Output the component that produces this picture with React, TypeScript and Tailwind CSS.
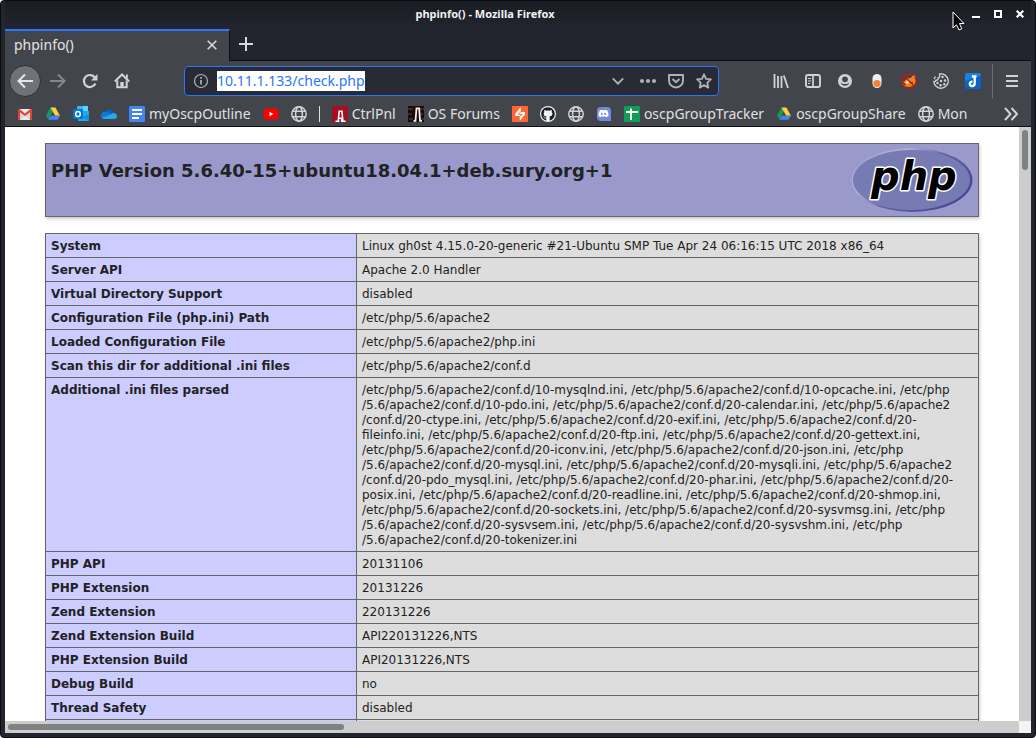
import type { ReactNode } from "react";
import { FaDiscord, FaGithub } from "react-icons/fa";

const Svg = ({ children, className = "size-4" }: { children: ReactNode; className?: string }) => (
  <svg viewBox="0 0 16 16" className={`${className} shrink-0`} fill="currentColor" aria-hidden="true">
    {children}
  </svg>
);

const Globe = () => (
  <Svg>
    <g fill="none" stroke="#d3d3d4" strokeWidth="1.5">
      <circle cx="8" cy="8" r="7.2" />
      <ellipse cx="8" cy="8" rx="3.4" ry="7.2" />
      <path d="M1.8 5.2h12.4M1.8 10.8h12.4" />
    </g>
  </Svg>
);

const Drive = () => (
  <Svg>
    <path d="M5.4 1.5 1 9.6l2.4 4L7.9 5.8z" fill="#0f9d58" />
    <path d="M5.4 1.5h5L15 9.7h-4.8z" fill="#ffcd40" />
    <path d="M5.8 9.7H15l-2.4 4H3.4z" fill="#4285f4" />
  </Svg>
);

const Gmail = () => (
  <Svg>
    <path d="M1 3h14v11H1z" fill="#e9e9e9" />
    <path d="M3 6v8l5-4.5L13 14V6L8 9.6z" fill="#d5d5d5" />
    <path d="M1 14V3h1.6L8 7.4 13.4 3H15v11h-2V6.2L8 10 3 6.2V14z" fill="#db4437" />
  </Svg>
);

const Outlook = () => (
  <Svg>
    <path d="M4 0h11v6H4z" fill="#35b8f1" />
    <path d="M10 0h5v5h-5z" fill="#50d9ff" />
    <path d="M4 4h6v5H4z" fill="#0364b8" />
    <path d="M10 5h6v9a1 1 0 0 1-1 1H5V9h5z" fill="#28a8ea" />
    <path d="m16 8-7 3.6L16 15z" fill="#1490df" />
    <rect x="0" y="3" width="10" height="10" rx="1" fill="#0078d4" />
    <ellipse cx="5" cy="8" rx="2.3" ry="2.6" fill="none" stroke="#fff" strokeWidth="1.5" />
  </Svg>
);

const OneDrive = () => (
  <Svg>
    <path d="M4 5.8A5 5 0 0 1 13 7l-4 5H3A3.2 3.2 0 0 1 0 9c0-2 1.7-3.3 4-3.2z" fill="#0364b8" />
    <path d="M4 5.8c2-.3 3 .2 4.5 1.2L12 9l-3 4H3.2A3.5 3.5 0 0 1 0 9.5c0-2 1.5-3.7 4-3.7z" fill="#0f78d4" />
    <path d="M8.5 9 12 7c2.6-.2 4 1.3 4 3.2 0 1.7-1.2 2.8-3 2.8H3.2c-1 0-1.9-.5-2.4-1.2z" fill="#28a8ea" />
  </Svg>
);

const Docs = () => (
  <Svg>
    <rect width="16" height="16" rx="1.5" fill="#4285f4" />
    <path d="M3 4h10M3 8h10M3 12h7" stroke="#fff" strokeWidth="1.8" />
  </Svg>
);

const Sheets = () => (
  <Svg>
    <rect width="16" height="16" rx="1" fill="#0f9d58" />
    <path d="M2 6h12M7 2.5V14" stroke="#fff" strokeWidth="2" />
  </Svg>
);

const Youtube = () => (
  <Svg>
    <rect x="0.5" y="2.5" width="15" height="11" rx="3" fill="#f00" />
    <path d="M6.5 5.8v4.4L10.3 8z" fill="#fff" />
  </Svg>
);

const Offsec = ({ dark = false }: { dark?: boolean }) => (
  <Svg>
    <path d="M0 0h16v16H0z" fill={dark ? "#180b0c" : "#a60e22"} />
    {dark && <path d="M0 3h5M0 8h4M1 13h4M12 3h4M12 8h3M12 13h4" stroke="#66494b" strokeWidth="1.2" />}
    {dark ? (
      <path d="M5.5 14.8h2l1-12.5h2.700L12 14.800h2" fill="none" stroke="#f5eeee" strokeWidth="1.8" />
    ) : (
      <path d="M3.500 15.200h3v-3h3.200v3h4M6.400 13l.8-7.800h2.700l1 10" fill="none" stroke="#fff" strokeWidth="1.6" />
    )}
  </Svg>
);

const Burp = () => (
  <Svg>
    <path d="M0 0h16v16H0z" fill="#ff6633" />
    <path d="M8.700 1v5H13v2.200L7.800 15v-5H3.300V7.800z" fill="#fff" />
    <path d="M8.700 6 6 8.300h4.200L7.800 10" fill="none" stroke="#ff6633" strokeWidth=".9" />
  </Svg>
);

const bookmarks: { icon: ReactNode; name: string; text?: string }[] = [
  { icon: <Gmail />, name: "Gmail" },
  { icon: <Drive />, name: "Drive" },
  { icon: <Outlook />, name: "Outlook" },
  { icon: <OneDrive />, name: "OneDrive" },
  { icon: <Docs />, name: "Docs", text: "myOscpOutline" },
  { icon: <Youtube />, name: "YouTube" },
  { icon: <Globe />, name: "Site" },
  { icon: null, name: "separator" },
  { icon: <Offsec />, name: "Control panel", text: "CtrlPnl" },
  { icon: <Offsec dark />, name: "Forums", text: "OS Forums" },
  { icon: <Burp />, name: "Burp" },
  {
    icon: (
      <span className="flex size-4 shrink-0 items-center justify-center rounded-full bg-[#f2f2f2]">
        <FaGithub className="size-[14px] text-[#1b1f23]" />
      </span>
    ),
    name: "GitHub",
  },
  { icon: <Globe />, name: "Site" },
  {
    icon: (
      <span className="flex size-4 shrink-0 items-center justify-center">
        <span className="flex size-[14px] items-center justify-center rounded-sm rounded-br-none bg-[#7289da]">
          <FaDiscord className="size-[11px] text-white" />
        </span>
      </span>
    ),
    name: "Discord",
  },
  { icon: <Sheets />, name: "Sheets", text: "oscpGroupTracker" },
  { icon: <Drive />, name: "Drive", text: "oscpGroupShare" },
  { icon: <Globe />, name: "Monitor", text: "Mon" },
];

const tools: { name: string; icon: ReactNode }[] = [
  {
    name: "Library",
    icon: (
      <Svg>
        <path d="M1.500 1v14M5 3v12M8.500 3v12M10.800 2.500 15 15" fill="none" stroke="currentColor" strokeWidth="1.8" />
      </Svg>
    ),
  },
  {
    name: "Sidebars",
    icon: (
      <Svg>
        <rect x="1" y="2" width="14" height="12" rx="2" fill="none" stroke="currentColor" strokeWidth="1.9" />
        <path d="M8 2v12" stroke="currentColor" strokeWidth="1.7" />
        <path d="M3 5.500h3M3 8h3M3 10.500h2" stroke="currentColor" strokeWidth="1" />
      </Svg>
    ),
  },
  {
    name: "Account",
    icon: (
      <Svg>
        <circle cx="8" cy="8" r="7" />
        <circle cx="8" cy="6.300" r="2.900" fill="#42454c" />
        <path d="M3.600 9.500c.6 2.200 2.300 3.300 4.400 3.300s3.800-1.100 4.400-3.300c-1.200 1-2.700 1.500-4.400 1.500s-3.200-.5-4.400-1.500z" fill="#42454c" />
      </Svg>
    ),
  },
  {
    name: "Proxy toggle",
    icon: (
      <Svg>
        <rect x="3.500" y="1" width="9" height="14" rx="4.500" fill="#eee" />
        <circle cx="8" cy="10.500" r="3.600" fill="#f48232" />
      </Svg>
    ),
  },
  {
    name: "Proxy off",
    icon: (
      <Svg>
        <path d="M6 5.500 9.500 5 13 2l1.500 1.500.5 5-2 3.500-4 2-5-.5L1.500 12 1 8.500l2 .5z" fill="#e8861a" />
        <path d="m11 3 3-1 .5 3zM4 9l3-2 1.500 2L6 11.500z" fill="#ffd9a0" />
        <path d="m1.500 9.500 3 2.500M9 9l3 1" stroke="#5a2c12" strokeWidth="1.200" fill="none" />
        <circle cx="8" cy="8" r="7.200" fill="none" stroke="#cf1010" strokeWidth="1.200" />
        <path d="m3 3 10 10" stroke="#cf1010" strokeWidth="1.300" />
      </Svg>
    ),
  },
  {
    name: "Cookies",
    icon: (
      <Svg>
        <path
          d="M6.500 1A7.200 7.200 0 1 1 .8 8.500c1.200.3 2-.2 2-1.300 1.600.3 2.600-.6 2.300-2.200C6.500 4.800 7 3 6.500 1z"
          fill="none"
          stroke="currentColor"
          strokeWidth="1.300"
        />
        <path d="M1 5.800 2.500 3.500" stroke="currentColor" strokeWidth="1.300" />
        <circle cx="9.500" cy="4" r="1.200" />
        <circle cx="8" cy="8" r="1.200" />
        <circle cx="12" cy="7.500" r="1.200" />
        <circle cx="4.500" cy="10" r="1.200" />
        <circle cx="7.500" cy="12.300" r="1.200" />
        <circle cx="11.300" cy="11.200" r="1.200" />
      </Svg>
    ),
  },
  {
    name: "Notes",
    icon: (
      <Svg>
        <rect width="16" height="16" rx="2.500" fill="#0b63c7" />
        <path d="M0 8V2.500A2.500 2.500 0 0 1 2.500 0h11A2.500 2.500 0 0 1 16 2.500z" fill="#1a82e2" />
        <path d="M7 3.500h4.500M9.700 3.500v7c0 1.700-1.100 2.500-2.500 2.500S4.800 12 4.800 10.700 5.900 8.600 7.500 8.800" fill="none" stroke="#fff" strokeWidth="2.300" />
      </Svg>
    ),
  },
];

const rows: [string, string[]][] = [
  ["System", ["Linux gh0st 4.15.0-20-generic #21-Ubuntu SMP Tue Apr 24 06:16:15 UTC 2018 x86_64"]],
  ["Server API", ["Apache 2.0 Handler"]],
  ["Virtual Directory Support", ["disabled"]],
  ["Configuration File (php.ini) Path", ["/etc/php/5.6/apache2"]],
  ["Loaded Configuration File", ["/etc/php/5.6/apache2/php.ini"]],
  ["Scan this dir for additional .ini files", ["/etc/php/5.6/apache2/conf.d"]],
  [
    "Additional .ini files parsed",
    [
      "/etc/php/5.6/apache2/conf.d/10-mysqlnd.ini, /etc/php/5.6/apache2/conf.d/10-opcache.ini, /etc/php",
      "/5.6/apache2/conf.d/10-pdo.ini, /etc/php/5.6/apache2/conf.d/20-calendar.ini, /etc/php/5.6/apache2",
      "/conf.d/20-ctype.ini, /etc/php/5.6/apache2/conf.d/20-exif.ini, /etc/php/5.6/apache2/conf.d/20-",
      "fileinfo.ini, /etc/php/5.6/apache2/conf.d/20-ftp.ini, /etc/php/5.6/apache2/conf.d/20-gettext.ini,",
      "/etc/php/5.6/apache2/conf.d/20-iconv.ini, /etc/php/5.6/apache2/conf.d/20-json.ini, /etc/php",
      "/5.6/apache2/conf.d/20-mysql.ini, /etc/php/5.6/apache2/conf.d/20-mysqli.ini, /etc/php/5.6/apache2",
      "/conf.d/20-pdo_mysql.ini, /etc/php/5.6/apache2/conf.d/20-phar.ini, /etc/php/5.6/apache2/conf.d/20-",
      "posix.ini, /etc/php/5.6/apache2/conf.d/20-readline.ini, /etc/php/5.6/apache2/conf.d/20-shmop.ini,",
      "/etc/php/5.6/apache2/conf.d/20-sockets.ini, /etc/php/5.6/apache2/conf.d/20-sysvmsg.ini, /etc/php",
      "/5.6/apache2/conf.d/20-sysvsem.ini, /etc/php/5.6/apache2/conf.d/20-sysvshm.ini, /etc/php",
      "/5.6/apache2/conf.d/20-tokenizer.ini",
    ],
  ],
  ["PHP API", ["20131106"]],
  ["PHP Extension", ["20131226"]],
  ["Zend Extension", ["220131226"]],
  ["Zend Extension Build", ["API220131226,NTS"]],
  ["PHP Extension Build", ["API20131226,NTS"]],
  ["Debug Build", ["no"]],
  ["Thread Safety", ["disabled"]],
  ["", [""]],
];

function TitleBar() {
  return (
    <div className="flex h-7 shrink-0 items-center bg-linear-to-b from-[#1a1c23] to-[#22252e]">
      <h1 className="flex-1 pb-px text-center text-[11px] font-bold text-[#f2f2f2]">phpinfo() - Mozilla Firefox</h1>
      <div className="flex text-white">
        <button aria-label="Minimize" className="flex h-7 w-[22px] items-center justify-center">
          <svg viewBox="0 0 8 8" className="size-2" aria-hidden="true"><path d="M0 5h8v2H0z" fill="currentColor" /></svg>
        </button>
        <button aria-label="Maximize" className="flex h-7 w-[22px] items-center justify-center pb-[2px]">
          <svg viewBox="0 0 8 8" className="size-2" aria-hidden="true"><path d="M1 1h6v6H1z" fill="none" stroke="currentColor" strokeWidth="2" /></svg>
        </button>
        <button aria-label="Close" className="flex h-7 w-[22px] items-center justify-center pb-[2px]">
          <svg viewBox="0 0 8 8" className="size-2" aria-hidden="true"><path d="m.7.7 6.600 6.600M7.300.7.7 7.300" stroke="currentColor" strokeWidth="2.100" /></svg>
        </button>
      </div>
    </div>
  );
}

function TabStrip() {
  return (
    <div className="flex h-8 shrink-0 bg-[#22252e]">
      <div className="flex w-[225px] items-center justify-between border-t-2 border-r border-t-[#2a76f6] border-r-[#0d0e12] bg-[#42454c] pr-3 pb-[2px] pl-[9px] text-sm text-[#e4e4e4]">
        <span>phpinfo()</span>
        <button aria-label="Close tab">
          <svg viewBox="0 0 10 10" className="size-[10px]" aria-hidden="true"><path d="m.7.7 8.600 8.600M9.300.7.700 9.300" stroke="#d8d8d8" strokeWidth="1.600" /></svg>
        </button>
      </div>
      <div className="flex flex-1 border-b border-[#0d0e12] pl-[9px]">
        <button aria-label="New tab" className="self-center pb-px">
          <svg viewBox="0 0 14 14" className="size-[14px]" aria-hidden="true"><path d="M7 0v14M0 7h14" stroke="#d8d8d8" strokeWidth="2" /></svg>
        </button>
      </div>
    </div>
  );
}

const navButton = "flex size-8 shrink-0 items-center justify-center";

function NavBar() {
  return (
    <div className="flex h-10 shrink-0 items-center bg-[#42454c] pr-[3px] pl-1 text-[#d3d3d4]">
      <button aria-label="Back" className={`${navButton} mr-px rounded-full border border-[#2e3036] bg-[#717277] text-[#e6e6e6]`}>
        <Svg><path d="M16 8H1.500M8 1.500 1.500 8 8 14.500" fill="none" stroke="currentColor" strokeWidth="2" /></Svg>
      </button>
      <button aria-label="Forward" className={`${navButton} text-[#85878b]`}>
        <Svg><path d="M0 8h14.500M8 1.500 14.500 8 8 14.500" fill="none" stroke="currentColor" strokeWidth="2" /></Svg>
      </button>
      <button aria-label="Reload" className={navButton}>
        <Svg>
          <path d="M13.400 10.500A6 6 0 1 1 12.800 4.500" fill="none" stroke="currentColor" strokeWidth="2.200" />
          <path d="M15.500 1v6.500H9z" />
        </Svg>
      </button>
      <button aria-label="Home" className={navButton}>
        <Svg>
          <path d="M.8 8.500 8 1.500l7.200 7" fill="none" stroke="currentColor" strokeWidth="2" />
          <path d="M3.300 7.500v6.700h9.400V7.500" fill="none" stroke="currentColor" strokeWidth="2" />
          <path d="M6.300 13.500V9h3.400v4.500zM12 1.500h1.800V6L12 4.500z" />
        </Svg>
      </button>
      <div className="mx-[46px] flex h-[30px] flex-1 items-center rounded border border-[#2a76f6] bg-[#282a35] pl-2 text-[#b1b2b5]">
        <svg viewBox="0 0 16 16" className="mr-2 size-4" aria-hidden="true">
          <circle cx="8" cy="8" r="6.500" fill="none" stroke="currentColor" strokeWidth="1.200" />
          <path d="M8 7v4.500M8 4v1.700" stroke="currentColor" strokeWidth="1.700" />
        </svg>
        <input
          aria-label="Address"
          defaultValue="10.11.1.133/check.php"
          className="field-sizing-content h-5 bg-white text-sm leading-5 text-[#2a76f6] outline-none"
        />
        <span className="flex-1" />
        <button aria-label="Show history" className="flex w-8 justify-center">
          <Svg className="size-3"><path d="m1 4.500 7 7 7-7" fill="none" stroke="currentColor" strokeWidth="2.500" /></Svg>
        </button>
        <button aria-label="Page actions" className="flex w-7 justify-center">
          <Svg><circle cx="2" cy="8" r="2" /><circle cx="8" cy="8" r="2" /><circle cx="14" cy="8" r="2" /></Svg>
        </button>
        <button aria-label="Save to Pocket" className="flex w-7 justify-center">
          <Svg>
            <path d="M1 2h14v5.500a7 7 0 0 1-14 0z" fill="none" stroke="currentColor" strokeWidth="1.900" strokeLinejoin="round" />
            <path d="M4.500 6 8 9.300 11.500 6" fill="none" stroke="currentColor" strokeWidth="1.900" />
          </Svg>
        </button>
        <button aria-label="Bookmark this page" className="flex w-7 justify-center">
          <Svg><path d="m8 1.300 2 4.500 4.900.6-3.600 3.300 1 4.900L8 12.100l-4.300 2.500 1-4.900L1.100 6.400 6 5.800z" fill="none" stroke="currentColor" strokeWidth="1.800" strokeLinejoin="round" /></Svg>
        </button>
      </div>
      <div className="flex">
        {tools.map((tool) => (
          <button key={tool.name} aria-label={tool.name} className={navButton}>{tool.icon}</button>
        ))}
      </div>
      <div className="ml-[3px] flex h-[34px] items-center border-l border-[#6c6e73] pl-[3px]">
        <button aria-label="Menu" className={navButton}>
          <svg viewBox="0 0 12 12" className="size-3" aria-hidden="true"><path d="M0 1h12M0 6h12M0 11h12" stroke="currentColor" strokeWidth="2" /></svg>
        </button>
      </div>
    </div>
  );
}

function BookmarksBar() {
  return (
    <nav className="flex h-[26px] shrink-0 items-center gap-3 border-b border-[#0d0e12] bg-[#42454c] px-3 text-sm leading-5 text-[#e0e0e0]">
      {bookmarks.map((b, i) =>
        b.icon ? (
          <a key={i} href="#" aria-label={b.name} className="flex shrink-0 items-center gap-1">
            {b.icon}
            {b.text && <span>{b.text}</span>}
          </a>
        ) : (
          <span key={i} className="h-4 w-px shrink-0 bg-[#e0e0e0]" />
        ),
      )}
      <button aria-label="More bookmarks" className="ml-auto">
        <svg viewBox="0 0 16 14" className="h-[14px] w-4" aria-hidden="true">
          <path d="m2 1 5.500 6L2 13M8.500 1l5.500 6-5.500 6" fill="none" stroke="#d3d3d4" strokeWidth="2" />
        </svg>
      </button>
    </nav>
  );
}

function PhpLogo() {
  return (
    <svg viewBox="0 0 122 66" className="h-[66px] w-[122px] shrink-0" role="img" aria-label="PHP logo">
      <defs>
        <linearGradient id="rim" x1="0" y1="0" x2="1" y2="0.6">
          <stop offset="0" stopColor="#9a9acb" />
          <stop offset="0.35" stopColor="#aeb2d5" />
          <stop offset="0.6" stopColor="#6567a5" />
          <stop offset="1" stopColor="#484893" />
        </linearGradient>
      </defs>
      <ellipse cx="61" cy="33" rx="60.500" ry="32" fill="url(#rim)" />
      <ellipse cx="60.500" cy="33" rx="58.500" ry="30" fill="#777bb3" />
      <text
        x="20"
        y="43"
        fontFamily="DejaVu Sans"
        fontSize="40"
        fontWeight="700"
        fontStyle="italic"
        fill="#000"
        stroke="#fff"
        strokeWidth="3"
        strokeLinejoin="round"
        paintOrder="stroke"
      >
        php
      </text>
    </svg>
  );
}

function InfoPage() {
  return (
    <main className="min-w-0 flex-1 overflow-hidden bg-white px-10 pt-4 font-['DejaVu_Sans',sans-serif] text-xs leading-[15px] text-[#222]">
      <header className="flex h-[74px] items-start justify-between border border-[#666] bg-[#9999cc] pt-[3px] pr-[5px] pl-[5px] shadow-[1px_2px_3px_#ccc]">
        <h2 className="pt-[13px] text-lg leading-[22px] font-bold">PHP Version 5.6.40-15+ubuntu18.04.1+deb.sury.org+1</h2>
        <PhpLogo />
      </header>
      <table className="mt-4 w-full table-fixed border-collapse shadow-[1px_2px_3px_#ccc]">
        <tbody>
          {rows.map(([name, lines]) => (
            <tr key={name} className="h-6">
              <th scope="row" className="w-1/3 border border-[#666] bg-[#ccccff] px-[5px] pt-[5px] pb-[3px] text-left align-top font-bold">{name}</th>
              <td className="border border-[#666] bg-[#dddddd] px-[5px] pt-[5px] pb-[3px] align-top whitespace-nowrap">
                {lines.map((line, i) => (
                  <span key={i} className="block">{line}</span>
                ))}
              </td>
            </tr>
          ))}
        </tbody>
      </table>
    </main>
  );
}

export default function App() {
  return (
    <div className="h-screen bg-white">
      <div className="relative flex h-full flex-col rounded-[4px] border border-[#0b0c10] bg-[#22252e] px-1 pb-1 font-['Noto_Sans',sans-serif]">
        <TitleBar />
        <TabStrip />
        <NavBar />
        <BookmarksBar />
        <div className="flex min-h-0 flex-1">
          <InfoPage />
          <div className="w-3 shrink-0 bg-[#cdcdcd] px-[3px] pt-[3px]">
            <div className="h-10 rounded-full bg-[#7f8281]" />
          </div>
        </div>
        <div className="flex h-3 shrink-0">
          <div className="flex-1 bg-[#cdcdcd] p-[3px]">
            <div className="h-[6px] w-1/3 rounded-full bg-[#7f8281]" />
          </div>
          <div className="w-3 bg-[#f5f4f2]" />
        </div>
        <svg viewBox="0 0 14 20" className="pointer-events-none absolute top-[10px] right-[69px] h-5 w-[14px]" aria-hidden="true">
          <path d="M1 1v16l3.500-3.200L7 19l2.800-1.200L7.500 12.500H12z" fill="#000" stroke="#fff" strokeWidth="1" />
        </svg>
      </div>
    </div>
  );
}
